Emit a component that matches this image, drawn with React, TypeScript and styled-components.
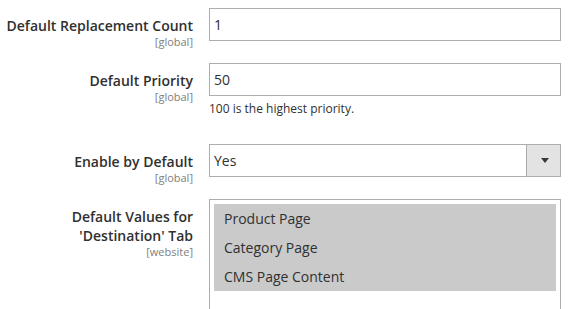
import React from "react";
import styled, { createGlobalStyle } from "styled-components";

const Global = createGlobalStyle`
  html, body { margin: 0; padding: 0; background: #ffffff; }
  body { font-family: "Open Sans", "Noto Sans", sans-serif; color: #303030; }
  * { box-sizing: border-box; }
`;

const Form = styled.div`
  display: flex;
  flex-direction: column;
  padding-top: 8px;
  width: 581px;
  height: 309px;
  overflow: hidden;
`;

const Row = styled.div<{ $h: number }>`
  display: grid;
  grid-template-columns: 193px 352px;
  column-gap: 16px;
  align-items: start;
  height: ${(p) => p.$h}px;
  flex-shrink: 0;
`;

const LabelCol = styled.div`
  display: flex;
  flex-direction: column;
  align-items: flex-end;
  text-align: right;
  padding-top: 7.5px;
`;

const LabelText = styled.span`
  font-size: 14px;
  font-weight: 600;
  line-height: 19px;
  color: #303030;
`;

const Scope = styled.span`
  font-size: 11px;
  line-height: 13px;
  color: #808080;
`;

const Control = styled.div`
  display: flex;
  flex-direction: column;
`;

const Input = styled.div`
  height: 33px;
  border: 1px solid #adadad;
  background: #fff;
  display: flex;
  align-items: center;
  padding: 0 4px;
  font-size: 14px;
  color: #303030;
`;

const Hint = styled.div`
  margin-top: 4.5px;
  font-size: 12px;
  line-height: 16px;
  color: #303030;
`;

const Select = styled.div`
  height: 33px;
  border: 1px solid #adadad;
  background: #fff;
  display: flex;
  align-items: stretch;
  font-size: 14px;
  color: #303030;
`;

const SelectValue = styled.div`
  flex: 1;
  display: flex;
  align-items: center;
  padding-left: 4px;
`;

const ArrowBtn = styled.div`
  width: 34px;
  border-left: 1px solid #adadad;
  background: #e3e3e3;
  display: flex;
  align-items: center;
  justify-content: center;
  padding-left: 2px;
`;

const Arrow = styled.div`
  width: 0;
  height: 0;
  border-left: 4px solid transparent;
  border-right: 4px solid transparent;
  border-top: 5px solid #41362f;
`;

const Multi = styled.div`
  height: 140px;
  border: 1px solid #adadad;
  background: #fff;
  padding: 4px;
`;

const Option = styled.div<{ $selected?: boolean }>`
  height: 29px;
  line-height: 29px;
  padding-left: 10px;
  font-size: 14px;
  color: #303030;
  background: ${(p) => (p.$selected ? "#cacaca" : "transparent")};
`;

export default function App() {
  return (
    <>
      <Global />
      <Form>
        <Row $h={55}>
          <LabelCol>
            <LabelText>Default Replacement Count</LabelText>
            <Scope>[global]</Scope>
          </LabelCol>
          <Control>
            <Input>1</Input>
          </Control>
        </Row>
        <Row $h={81}>
          <LabelCol>
            <LabelText>Default Priority</LabelText>
            <Scope>[global]</Scope>
          </LabelCol>
          <Control>
            <Input>50</Input>
            <Hint>100 is the highest priority.</Hint>
          </Control>
        </Row>
        <Row $h={55}>
          <LabelCol>
            <LabelText>Enable by Default</LabelText>
            <Scope>[global]</Scope>
          </LabelCol>
          <Control>
            <Select>
              <SelectValue>Yes</SelectValue>
              <ArrowBtn>
                <Arrow />
              </ArrowBtn>
            </Select>
          </Control>
        </Row>
        <Row $h={140}>
          <LabelCol>
            <LabelText>Default Values for</LabelText>
            <LabelText>'Destination' Tab</LabelText>
            <Scope>[website]</Scope>
          </LabelCol>
          <Control>
            <Multi>
              <Option $selected>Product Page</Option>
              <Option $selected>Category Page</Option>
              <Option $selected>CMS Page Content</Option>
            </Multi>
          </Control>
        </Row>
      </Form>
    </>
  );
}
